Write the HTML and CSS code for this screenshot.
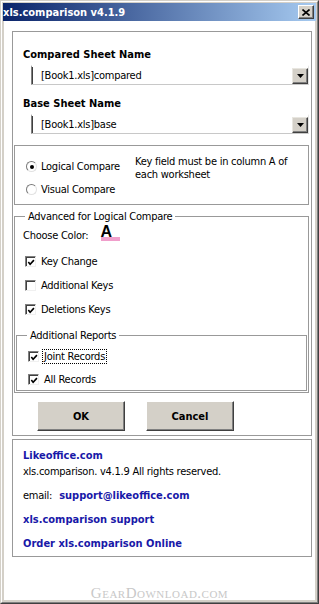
FILE: index.html
```html
<!DOCTYPE html>
<html lang="en">
<head>
    <meta charset="UTF-8">
    <title>xls.comparison v4.1.9</title>
    <link rel="stylesheet" href="styles.css">
</head>
<body>

<div class="window">
    <div class="frame">
        <div class="titlebar">
            <span class="title">xls.comparison v4.1.9</span>
            <button class="close-btn">
                <svg width="8" height="7" viewBox="0 0 8 7"><path d="M0.5 0.5 L7.5 6.5 M7.5 0.5 L0.5 6.5" stroke="#000" stroke-width="1.6"/></svg>
            </button>
        </div>

        <div class="client">
            <div class="panel main-panel">
                <div class="field-label">Compared Sheet Name</div>
                <div class="combo">
                    <span class="combo-text">[Book1.xls]compared</span>
                    <span class="combo-btn"><svg width="7" height="4" viewBox="0 0 7 4"><path d="M0 0 H7 L3.5 4 Z" fill="#000"/></svg></span>
                </div>

                <div class="field-label second">Base Sheet Name</div>
                <div class="combo">
                    <span class="combo-text">[Book1.xls]base</span>
                    <span class="combo-btn"><svg width="7" height="4" viewBox="0 0 7 4"><path d="M0 0 H7 L3.5 4 Z" fill="#000"/></svg></span>
                </div>

                <div class="option-box">
                    <div class="option-list">
                        <div class="radio-row"><span class="radio checked"></span><span>Logical Compare</span></div>
                        <div class="radio-row"><span class="radio"></span><span>Visual Compare</span></div>
                    </div>
                    <div class="option-note">Key field must be in column A of<br>each worksheet</div>
                </div>

                <fieldset class="advanced">
                    <legend>Advanced for Logical Compare</legend>
                    <div class="choose-row">
                        <span>Choose Color:</span>
                        <span class="swatch">
                            <span class="swatch-letter">A</span>
                            <span class="swatch-bar"></span>
                        </span>
                    </div>
                    <div class="check-row first"><span class="checkbox checked"><svg width="9" height="9" viewBox="0 0 9 9"><polyline points="1.5,4 3.5,6.5 7.8,1.8" fill="none" stroke="#000" stroke-width="1.8"/></svg></span><span class="check-label">Key Change</span></div>
                    <div class="check-row"><span class="checkbox"></span><span class="check-label">Additional Keys</span></div>
                    <div class="check-row"><span class="checkbox checked"><svg width="9" height="9" viewBox="0 0 9 9"><polyline points="1.5,4 3.5,6.5 7.8,1.8" fill="none" stroke="#000" stroke-width="1.8"/></svg></span><span class="check-label">Deletions Keys</span></div>

                    <fieldset class="reports">
                        <legend>Additional Reports</legend>
                        <div class="check-row first"><span class="checkbox checked"><svg width="9" height="9" viewBox="0 0 9 9"><polyline points="1.5,4 3.5,6.5 7.8,1.8" fill="none" stroke="#000" stroke-width="1.8"/></svg></span><span class="check-label focused">Joint Records</span></div>
                        <div class="check-row"><span class="checkbox checked"><svg width="9" height="9" viewBox="0 0 9 9"><polyline points="1.5,4 3.5,6.5 7.8,1.8" fill="none" stroke="#000" stroke-width="1.8"/></svg></span><span class="check-label">All Records</span></div>
                    </fieldset>
                </fieldset>

                <div class="buttons">
                    <button class="btn">OK</button>
                    <button class="btn">Cancel</button>
                </div>
            </div>

            <div class="panel info-panel">
                <div class="info-line link">Likeoffice.com</div>
                <div class="info-line tight">xls.comparison. v4.1.9 All rights reserved.</div>
                <div class="info-line">email:<span class="link email">support@likeoffice.com</span></div>
                <div class="info-line link">xls.comparison support</div>
                <div class="info-line link">Order xls.comparison Online</div>
            </div>

            <div class="watermark">GearDownload.com</div>
        </div>
    </div>
</div>

</body>
</html>
```

FILE: styles.css
```css
* {
    box-sizing: border-box;
}

body {
    margin: 0;
    background: #fff;
    color: #000;
    font-family: "DejaVu Sans Condensed", "DejaVu Sans", sans-serif;
    font-stretch: condensed;
    font-size: 11px;
    line-height: 13px;
    letter-spacing: -0.25px;
}

.window {
    width: 319px;
    height: 604px;
    border: 1px solid;
    border-color: #d4d0c8 #404040 #404040 #d4d0c8;
    background: #d4d0c8;
}

.frame {
    height: 100%;
    border: 1px solid;
    border-color: #fff #808080 #808080 #fff;
    padding: 1px 1px 2px 1px;
    display: flex;
    flex-direction: column;
}

.titlebar {
    flex: none;
    height: 18px;
    background: linear-gradient(to right, #0a246a, #a6caf0);
    display: flex;
    align-items: center;
    justify-content: space-between;
    padding: 0 2px 0 0;
}

.title {
    color: #fff;
    font-weight: bold;
    letter-spacing: 0;
}

.close-btn {
    width: 16px;
    height: 14px;
    padding: 0;
    background: #d4d0c8;
    border: 1px solid;
    border-color: #fff #404040 #404040 #fff;
    box-shadow: inset -1px -1px #808080;
    display: flex;
    align-items: center;
    justify-content: center;
}

.client {
    flex: 1;
    margin: 0 1px;
    background: #fff;
    display: flex;
    flex-direction: column;
}

.panel {
    width: 300px;
    margin-left: 8px;
    border: 1px solid #999;
}

.main-panel {
    margin-top: 10px;
    padding: 16px 0 4px 0;
}

.field-label {
    font-weight: bold;
    letter-spacing: 0;
    padding-left: 10px;
}

.field-label.second {
    margin-top: 12px;
}

.combo {
    display: flex;
    align-items: center;
    height: 20px;
    margin: 4px 2px 0 18px;
    border-style: solid;
    border-width: 2px 1px 1px 1px;
    border-color: #fff #e4e4e4 #c8c8c8 #808080;
    box-shadow: inset 1px 0 #404040;
}

.combo-text {
    flex: 1;
    padding-left: 9px;
}

.combo-btn {
    width: 16px;
    height: 16px;
    background: #d4d0c8;
    border: 1px solid;
    border-color: #e8e6e0 #404040 #404040 #e8e6e0;
    box-shadow: inset -1px -1px #808080;
    display: flex;
    align-items: center;
    justify-content: center;
}

.option-box {
    display: flex;
    height: 60px;
    margin: 11px 2px 0 1px;
    border: 1px solid #999;
}

.option-list {
    width: 120px;
    padding: 14px 0 0 11px;
}

.radio-row {
    display: flex;
    align-items: center;
    gap: 4px;
    height: 13px;
}

.radio-row + .radio-row {
    margin-top: 10px;
}

.radio {
    width: 11px;
    height: 11px;
    border-radius: 50%;
    border: 1px solid;
    border-color: #7a7a7a #e2e2e2 #e2e2e2 #7a7a7a;
    background: #fff;
    display: flex;
    align-items: center;
    justify-content: center;
}

.radio.checked::after {
    content: "";
    width: 4px;
    height: 4px;
    border-radius: 50%;
    background: #000;
}

.option-note {
    padding-top: 9px;
    white-space: nowrap;
}

fieldset {
    margin: 0;
    padding: 0;
    min-width: 0;
    border: 1px solid #999;
}

legend {
    margin-left: 10px;
    padding: 0 3px;
    line-height: 13px;
}

.advanced {
    margin: 5px 2px 0 1px;
}

.choose-row {
    display: flex;
    align-items: center;
    height: 13px;
    margin-top: 6px;
    padding-left: 8px;
}

.swatch {
    display: flex;
    flex-direction: column;
    margin: 0 0 4px 12px;
}

.swatch-letter {
    font-family: "Liberation Sans", Arial, sans-serif;
    font-weight: bold;
    font-size: 16px;
    line-height: 11px;
    height: 11px;
    letter-spacing: 0;
}

.swatch-bar {
    width: 19px;
    height: 4px;
    margin-left: 1px;
    background: #f09ecb;
}

.check-row {
    display: flex;
    align-items: center;
    height: 13px;
    margin-top: 11px;
    padding-left: 10px;
}

.check-row.first {
    margin-top: 13px;
}

.checkbox {
    width: 11px;
    height: 11px;
    background: #fff;
    border: 1px solid;
    border-color: #808080 #f0f0f0 #f0f0f0 #808080;
    box-shadow: inset 1px 1px #404040;
    display: flex;
    align-items: center;
    justify-content: center;
    padding: 1px 0 0 1px;
}

.check-label {
    margin-left: 3px;
    padding: 0 1px;
    border: 1px solid transparent;
    white-space: nowrap;
}

.check-label.focused {
    border: 1px dotted #000;
}

.reports {
    margin: 13px 1px 1px 1px;
    padding-bottom: 4px;
}

.reports .check-row {
    padding-left: 11px;
    margin-top: 10px;
}

.reports .check-row.first {
    margin-top: 8px;
}

.buttons {
    display: flex;
    gap: 21px;
    margin-top: 8px;
    padding-left: 24px;
}

.btn {
    width: 88px;
    height: 30px;
    padding: 0;
    background: #d4d0c8;
    border: 1px solid;
    border-color: #fff #404040 #404040 #fff;
    box-shadow: inset -1px -1px #808080;
    font-family: inherit;
    font-stretch: condensed;
    font-size: 11px;
    font-weight: bold;
    color: #000;
}

.info-panel {
    margin-top: 3px;
    padding: 9px 0 6px 10px;
}

.info-line {
    margin-top: 11px;
    white-space: nowrap;
}

.info-line:first-child {
    margin-top: 0;
}

.info-line.tight {
    margin-top: 3px;
}

.link {
    color: #1818a8;
    font-weight: bold;
    letter-spacing: 0;
}

.email {
    margin-left: 7px;
}

.watermark {
    margin-top: auto;
    text-align: center;
    font-family: "Liberation Serif", serif;
    font-variant: small-caps;
    font-size: 15px;
    line-height: 14px;
    letter-spacing: 0.5px;
    color: #c8c8c8;
}
```
